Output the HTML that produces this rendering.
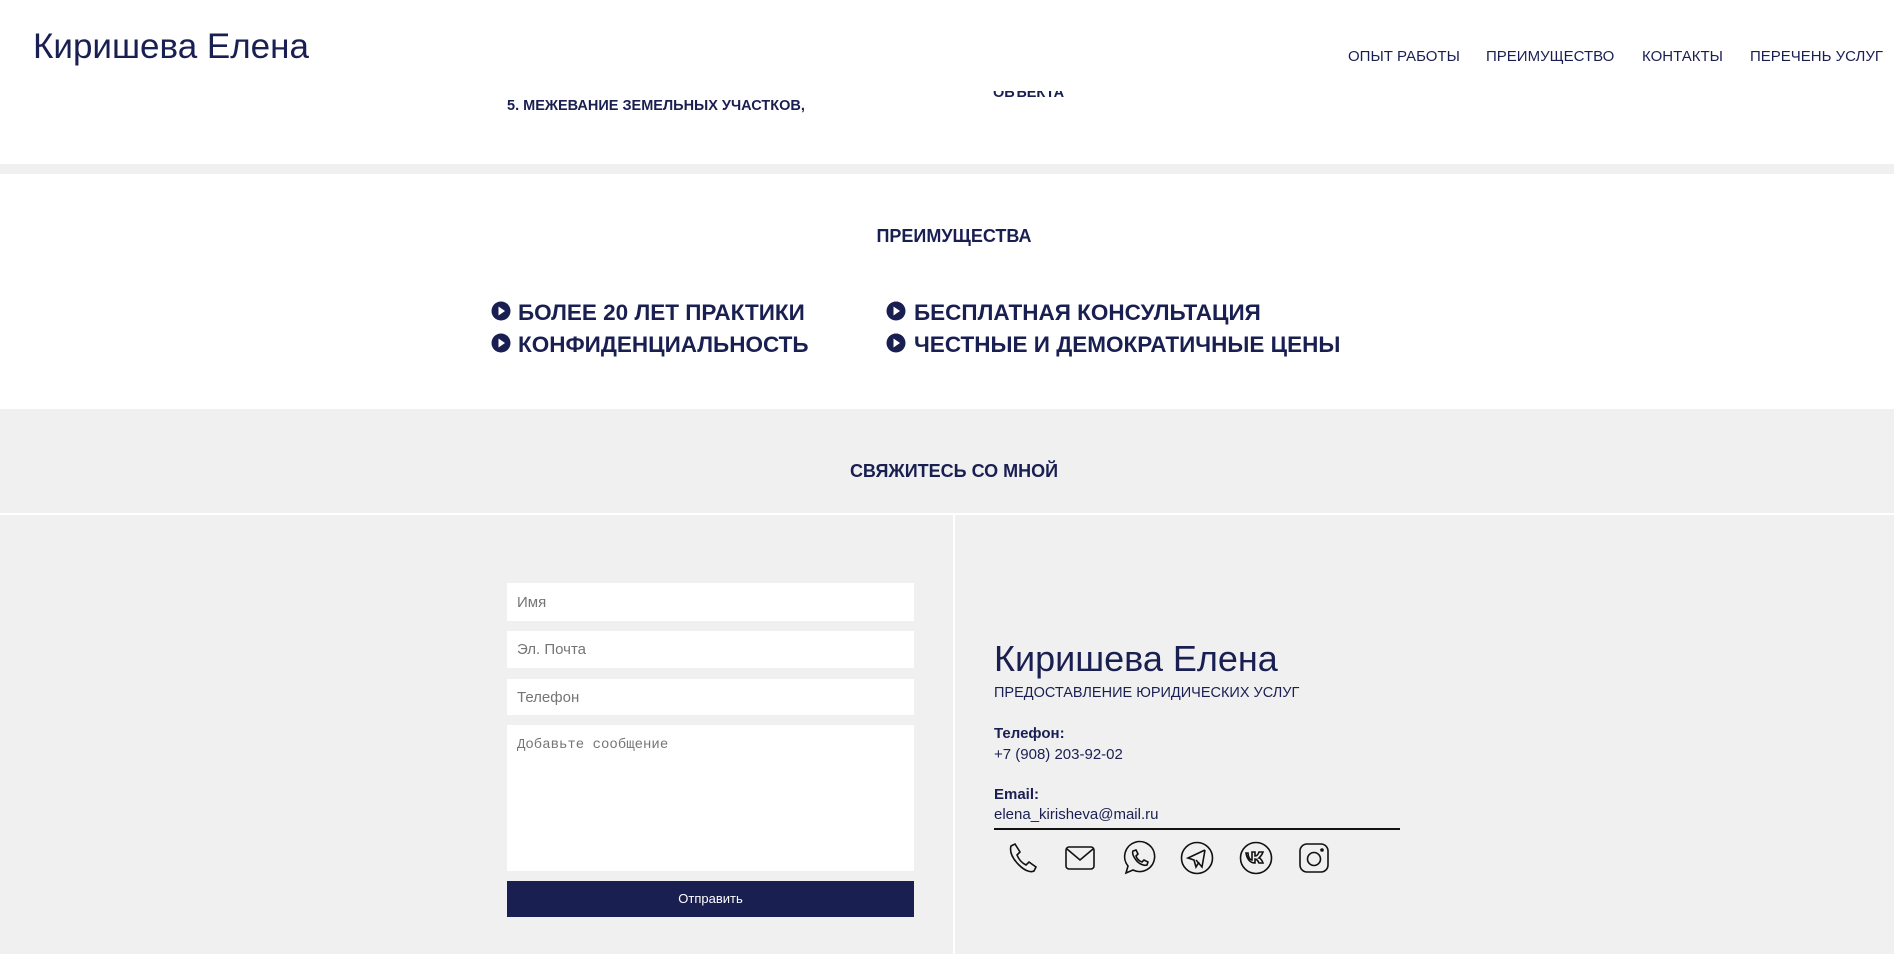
<!DOCTYPE html>
<html><head><meta charset="utf-8">
<style>
*{margin:0;padding:0;box-sizing:border-box}
body{width:1894px;height:954px;overflow:hidden;background:#fff;font-family:"Liberation Sans","DejaVu Sans",sans-serif;color:#1a1f52;position:relative}
.a{position:absolute;white-space:nowrap}
.b{font-weight:bold}
input,textarea{position:absolute;left:507px;width:407px;background:#fff;border:none;font-family:"Liberation Sans",sans-serif;font-size:15px;padding-left:10px;color:#666;resize:none;outline:none}
.ic{position:absolute;top:840px;width:36px;height:36px}
</style></head><body>
<div class="a b" style="left:507px;top:98px;font-size:14.5px">5. МЕЖЕВАНИЕ ЗЕМЕЛЬНЫХ УЧАСТКОВ,</div>
<div class="a b" style="left:993px;top:85px;font-size:14.5px">ОБЪЕКТА</div>
<div class="a" style="left:0;top:0;width:1894px;height:91px;background:#fff"></div>
<div class="a" style="left:33px;top:27px;font-size:35px">Киришева Елена</div>
<div class="a" style="left:1348px;top:48px;font-size:15px">ОПЫТ РАБОТЫ</div>
<div class="a" style="left:1486px;top:48px;font-size:15px">ПРЕИМУЩЕСТВО</div>
<div class="a" style="left:1642px;top:48px;font-size:15px">КОНТАКТЫ</div>
<div class="a" style="left:1750px;top:48px;font-size:15px">ПЕРЕЧЕНЬ УСЛУГ</div>
<div class="a" style="left:0;top:164px;width:1894px;height:10px;background:#f0f0f0"></div>
<div class="a b" style="left:0;width:1908px;text-align:center;top:226px;font-size:18px">ПРЕИМУЩЕСТВА</div>
<svg class="a" style="left:491px;top:301px" width="20" height="20"><circle cx="10" cy="10" r="9.5" fill="#1a1f52"/><path d="M7.5 5.5L14 10L7.5 14.5Z" fill="#fff"/></svg>
<svg class="a" style="left:491px;top:333px" width="20" height="20"><circle cx="10" cy="10" r="9.5" fill="#1a1f52"/><path d="M7.5 5.5L14 10L7.5 14.5Z" fill="#fff"/></svg>
<svg class="a" style="left:886px;top:301px" width="20" height="20"><circle cx="10" cy="10" r="9.5" fill="#1a1f52"/><path d="M7.5 5.5L14 10L7.5 14.5Z" fill="#fff"/></svg>
<svg class="a" style="left:886px;top:333px" width="20" height="20"><circle cx="10" cy="10" r="9.5" fill="#1a1f52"/><path d="M7.5 5.5L14 10L7.5 14.5Z" fill="#fff"/></svg>
<div class="a b" style="left:518px;top:300px;font-size:22.5px">БОЛЕЕ 20 ЛЕТ ПРАКТИКИ</div>
<div class="a b" style="left:518px;top:332px;font-size:22.5px">КОНФИДЕНЦИАЛЬНОСТЬ</div>
<div class="a b" style="left:914px;top:300px;font-size:22.5px">БЕСПЛАТНАЯ КОНСУЛЬТАЦИЯ</div>
<div class="a b" style="left:914px;top:332px;font-size:22.5px">ЧЕСТНЫЕ И ДЕМОКРАТИЧНЫЕ ЦЕНЫ</div>
<div class="a" style="left:0;top:409px;width:1894px;height:545px;background:#f0f0f0"></div>
<div class="a b" style="left:0;width:1908px;text-align:center;top:461px;font-size:18px">СВЯЖИТЕСЬ СО МНОЙ</div>
<div class="a" style="left:0;top:513px;width:1894px;height:2px;background:#fff"></div>
<div class="a" style="left:953px;top:513px;width:2px;height:441px;background:#fff"></div>
<input style="top:583px;height:38px" placeholder="Имя">
<input style="top:631px;height:37px" placeholder="Эл. Почта">
<input style="top:679px;height:36px" placeholder="Телефон">
<textarea style="top:725px;height:146px;padding-top:12px;font-family:'Liberation Mono',monospace;font-size:14px" placeholder="Добавьте сообщение"></textarea>
<div class="a" style="left:507px;top:881px;width:407px;height:36px;background:#1a1f52;color:#fff;font-size:13px;text-align:center;line-height:36px">Отправить</div>
<div class="a" style="left:994px;top:638px;font-size:36px">Киришева Елена</div>
<div class="a" style="left:994px;top:685px;font-size:14.5px">ПРЕДОСТАВЛЕНИЕ ЮРИДИЧЕСКИХ УСЛУГ</div>
<div class="a b" style="left:994px;top:725px;font-size:15px">Телефон:</div>
<div class="a" style="left:994px;top:746px;font-size:15px">+7 (908) 203-92-02</div>
<div class="a b" style="left:994px;top:786px;font-size:15px">Email:</div>
<div class="a" style="left:994px;top:806px;font-size:15px">elena_kirisheva@mail.ru</div>
<div class="a" style="left:994px;top:828px;width:406px;height:1.5px;background:#111"></div>
<svg class="ic" style="left:1003px" viewBox="0 0 36 36" fill="none" stroke="#111" stroke-width="1.6"><path d="M8 6l4-2 5 8-3 3c2 5 5 8 9 10l3-3 7 5-2 4c-4 2-10-1-15-6S6 13 8 6z"/></svg>
<svg class="ic" style="left:1062px" viewBox="0 0 36 36" fill="none" stroke="#111" stroke-width="1.6"><rect x="4" y="7" width="28" height="22" rx="3"/><path d="M5 9l13 11 13-11"/></svg>
<svg class="ic" style="left:1120px" viewBox="0 0 36 36" fill="none" stroke="#111" stroke-width="1.6"><path d="M6 33l2-7A15 15 0 1 1 13 30z"/><path d="M13 11l3-1 2 4-2 2c1 3 3 5 6 6l2-2 4 2-1 3c-3 1-8-1-11-5s-4-7-3-9z"/></svg>
<svg class="ic" style="left:1179px" viewBox="0 0 36 36" fill="none" stroke="#111" stroke-width="1.6"><circle cx="18" cy="18" r="15.5"/><path d="M26 10L9 18l6 2 2 7 3-5 M26 10l-3 17-6-7"/></svg>
<svg class="ic" style="left:1238px" viewBox="0 0 36 36" fill="none" stroke="#111" stroke-width="1.6"><circle cx="18" cy="18" r="15.5"/><path d="M8 13c1 6 4 10 9 10v-4c2 0 3 2 4 4h4c-1-3-3-5-4-5 1-1 3-3 4-6h-4c-1 3-2 4-4 4v-4h-3v8c-2 0-4-3-4-7z"/></svg>
<svg class="ic" style="left:1296px" viewBox="0 0 36 36" fill="none" stroke="#111" stroke-width="1.6"><rect x="4" y="4" width="28" height="28" rx="7"/><circle cx="18" cy="19" r="6.5"/><circle cx="26" cy="10" r="1" fill="#111"/></svg>
</body></html>
